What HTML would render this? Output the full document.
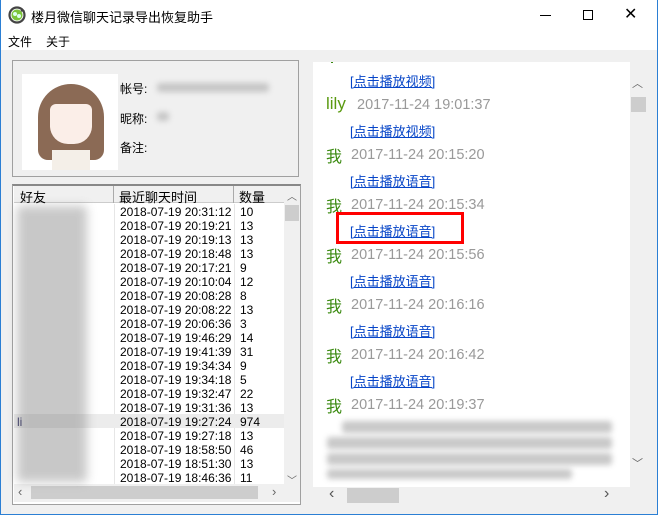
<!DOCTYPE html>
<html><head><meta charset="utf-8"><style>
*{margin:0;padding:0;box-sizing:border-box}
body{width:658px;height:515px;background:#f0f0f0;font-family:"Liberation Sans","Noto Sans CJK SC",sans-serif;font-size:12px;color:#000;position:relative;overflow:hidden}
.a{position:absolute}
.blur{filter:blur(3px);background:#777;opacity:.55;border-radius:3px}
.row{position:absolute;left:0;height:14px;line-height:14px;font-size:12px;width:270px}
.row span{position:absolute}
.lnk{position:absolute;left:350px;color:#0645c8;text-decoration:underline;font-size:13px}
.wo{position:absolute;left:326px;color:#3a8a10;font-size:16px}
.ts{position:absolute;left:351px;color:#999;font-size:14.5px;font-family:"Liberation Sans","DejaVu Sans",sans-serif}
</style></head><body>
<div class="a" style="left:0;top:0;width:658px;height:50px;background:#fff"></div>
<div class="a" style="left:0;top:0;width:1px;height:515px;background:#2b7fd4"></div>
<div class="a" style="right:0;top:0;width:1px;height:515px;background:#2b7fd4"></div>
<div class="a" style="left:0;bottom:0;width:658px;height:1px;background:#2b7fd4"></div>
<svg class="a" style="left:8px;top:6px" width="18" height="18" viewBox="0 0 18 18"><circle cx="9" cy="9" r="7.5" fill="none" stroke="#444" stroke-width="2.2"/><path d="M14 2 L17 5 L12 6Z" fill="#444"/><circle cx="9" cy="9" r="5.5" fill="#7cc43a"/><circle cx="7" cy="8" r="2" fill="#dfe"/><circle cx="11" cy="10" r="2" fill="#dfe"/></svg>
<div class="a" style="left:31px;top:7px;font-size:13px">楼月微信聊天记录导出恢复助手</div>
<div class="a" style="left:540px;top:15px;width:11px;height:1px;background:#000"></div>
<div class="a" style="left:583px;top:10px;width:10px;height:10px;border:1px solid #000"></div>
<div class="a" style="left:624px;top:6px;font-size:16px;line-height:18px">✕</div>
<div class="a" style="left:8px;top:33px;font-size:12px">文件</div>
<div class="a" style="left:46px;top:33px;font-size:12px">关于</div>
<div class="a" style="left:12px;top:60px;width:287px;height:117px;border:1px solid #a0a0a0"></div>
<div class="a" style="left:22px;top:74px;width:96px;height:96px;background:#fff;overflow:hidden">
<div class="a" style="left:16px;top:10px;width:66px;height:76px;background:#8b6a55;border-radius:33px 33px 10px 10px"></div>
<div class="a" style="left:28px;top:30px;width:42px;height:40px;background:#fbeee8;border-radius:6px 6px 18px 18px"></div>
<div class="a" style="left:30px;top:76px;width:38px;height:20px;background:#f4efe8"></div>
</div>
<div class="a" style="left:120px;top:80px">帐号:</div>
<div class="a blur" style="left:157px;top:83px;width:112px;height:9px;opacity:.35"></div>
<div class="a" style="left:120px;top:110px">昵称:</div>
<div class="a blur" style="left:157px;top:112px;width:12px;height:9px;opacity:.35"></div>
<div class="a" style="left:120px;top:139px">备注:</div>
<div class="a" style="left:12px;top:184px;width:289px;height:321px;border:1px solid #a0a0a0;border-top:2px solid #888;background:#fff"></div>
<div class="a" style="left:14px;top:186px;width:270px;height:17px;background:#f0f0f0;border-bottom:1px solid #ccc"></div>
<div class="a" style="left:113px;top:186px;width:1px;height:17px;background:#aaa"></div>
<div class="a" style="left:233px;top:186px;width:1px;height:17px;background:#aaa"></div>
<div class="a" style="left:20px;top:187px;font-size:13px">好友</div>
<div class="a" style="left:119px;top:187px;font-size:13px">最近聊天时间</div>
<div class="a" style="left:239px;top:187px;font-size:13px">数量</div>
<div class="a" style="left:114px;top:204px;width:1px;height:280px;background:#e6e6e6"></div>
<div class="a" style="left:234px;top:204px;width:1px;height:280px;background:#e6e6e6"></div>
<div class="a" style="left:284px;top:186px;width:16px;height:298px;background:#f0f0f0"></div>
<div class="a" style="left:287px;top:188px;font-size:10px;color:#666">︿</div>
<div class="a" style="left:285px;top:205px;width:14px;height:16px;background:#cdcdcd"></div>
<div class="a" style="left:287px;top:472px;font-size:10px;color:#666">﹀</div>
<div class="a" style="left:14px;top:484px;width:286px;height:18px;background:#f0f0f0"></div>
<div class="a" style="left:31px;top:486px;width:227px;height:13px;background:#cdcdcd"></div>
<div class="a" style="left:18px;top:484px;color:#666;font-size:13px">‹</div>
<div class="a" style="left:272px;top:484px;color:#666;font-size:13px">›</div>
<div class="a" style="left:14px;top:414px;width:270px;height:14px;background:#ececec"></div>
<div class="a" style="left:14px;top:205px">
<div class="row" style="top:0"><span style="left:106px">2018-07-19 20:31:12</span><span style="left:226px">10</span></div>
<div class="row" style="top:14px"><span style="left:106px">2018-07-19 20:19:21</span><span style="left:226px">13</span></div>
<div class="row" style="top:28px"><span style="left:106px">2018-07-19 20:19:13</span><span style="left:226px">13</span></div>
<div class="row" style="top:42px"><span style="left:106px">2018-07-19 20:18:48</span><span style="left:226px">13</span></div>
<div class="row" style="top:56px"><span style="left:106px">2018-07-19 20:17:21</span><span style="left:226px">9</span></div>
<div class="row" style="top:70px"><span style="left:106px">2018-07-19 20:10:04</span><span style="left:226px">12</span></div>
<div class="row" style="top:84px"><span style="left:106px">2018-07-19 20:08:28</span><span style="left:226px">8</span></div>
<div class="row" style="top:98px"><span style="left:106px">2018-07-19 20:08:22</span><span style="left:226px">13</span></div>
<div class="row" style="top:112px"><span style="left:106px">2018-07-19 20:06:36</span><span style="left:226px">3</span></div>
<div class="row" style="top:126px"><span style="left:106px">2018-07-19 19:46:29</span><span style="left:226px">14</span></div>
<div class="row" style="top:140px"><span style="left:106px">2018-07-19 19:41:39</span><span style="left:226px">31</span></div>
<div class="row" style="top:154px"><span style="left:106px">2018-07-19 19:34:34</span><span style="left:226px">9</span></div>
<div class="row" style="top:168px"><span style="left:106px">2018-07-19 19:34:18</span><span style="left:226px">5</span></div>
<div class="row" style="top:182px"><span style="left:106px">2018-07-19 19:32:47</span><span style="left:226px">22</span></div>
<div class="row" style="top:196px"><span style="left:106px">2018-07-19 19:31:36</span><span style="left:226px">13</span></div>
<div class="row" style="top:210px"><span style="left:3px;color:#336">li</span><span style="left:106px">2018-07-19 19:27:24</span><span style="left:226px">974</span></div>
<div class="row" style="top:224px"><span style="left:106px">2018-07-19 19:27:18</span><span style="left:226px">13</span></div>
<div class="row" style="top:238px"><span style="left:106px">2018-07-19 18:58:50</span><span style="left:226px">46</span></div>
<div class="row" style="top:252px"><span style="left:106px">2018-07-19 18:51:30</span><span style="left:226px">13</span></div>
<div class="row" style="top:266px"><span style="left:106px">2018-07-19 18:46:36</span><span style="left:226px">11</span></div>
</div>
<div class="a blur" style="left:17px;top:206px;width:70px;height:276px;opacity:.4;filter:blur(5px)"></div>
<div class="a" style="left:313px;top:62px;width:317px;height:425px;background:#fff;overflow:hidden">
<div class="a" style="left:18px;top:-2px;width:2px;height:3px;background:#3a8a10"></div>
</div>
<div class="a" style="left:630px;top:62px;width:17px;height:425px;background:#f0f0f0"></div>
<div class="a" style="left:632px;top:75px;font-size:11px;color:#666">︿</div>
<div class="a" style="left:631px;top:97px;width:15px;height:15px;background:#cdcdcd"></div>
<div class="a" style="left:632px;top:455px;font-size:11px;color:#666">﹀</div>
<div class="a" style="left:313px;top:487px;width:317px;height:18px;background:#f0f0f0"></div>
<div class="a" style="left:347px;top:488px;width:52px;height:15px;background:#cdcdcd"></div>
<div class="a" style="left:329px;top:485px;font-size:16px;color:#555">‹</div>
<div class="a" style="left:604px;top:485px;font-size:16px;color:#555">›</div>
<div class="lnk" style="top:71px">[点击播放视频]</div>
<div class="a" style="left:326px;top:94px;font-size:17px;color:#5a9a10">lily</div>
<div class="ts" style="left:357px;top:97px">2017-11-24 19:01:37</div>
<div class="lnk" style="top:121px">[点击播放视频]</div>
<div class="wo" style="top:143px">我</div><div class="ts" style="top:147px">2017-11-24 20:15:20</div>
<div class="lnk" style="top:171px">[点击播放语音]</div>
<div class="wo" style="top:193px">我</div><div class="ts" style="top:197px">2017-11-24 20:15:34</div>
<div class="lnk" style="top:221px">[点击播放语音]</div>
<div class="a" style="left:336px;top:212px;width:128px;height:32px;border:3px solid #f00"></div>
<div class="wo" style="top:243px">我</div><div class="ts" style="top:247px">2017-11-24 20:15:56</div>
<div class="lnk" style="top:271px">[点击播放语音]</div>
<div class="wo" style="top:293px">我</div><div class="ts" style="top:297px">2017-11-24 20:16:16</div>
<div class="lnk" style="top:321px">[点击播放语音]</div>
<div class="wo" style="top:343px">我</div><div class="ts" style="top:347px">2017-11-24 20:16:42</div>
<div class="lnk" style="top:371px">[点击播放语音]</div>
<div class="wo" style="top:393px">我</div><div class="ts" style="top:397px">2017-11-24 20:19:37</div>
<div class="a blur" style="left:342px;top:421px;width:270px;height:12px;opacity:.4"></div>
<div class="a blur" style="left:327px;top:437px;width:285px;height:12px;opacity:.4"></div>
<div class="a blur" style="left:327px;top:453px;width:285px;height:12px;opacity:.4"></div>
<div class="a blur" style="left:327px;top:469px;width:245px;height:10px;opacity:.4"></div>
</body></html>
